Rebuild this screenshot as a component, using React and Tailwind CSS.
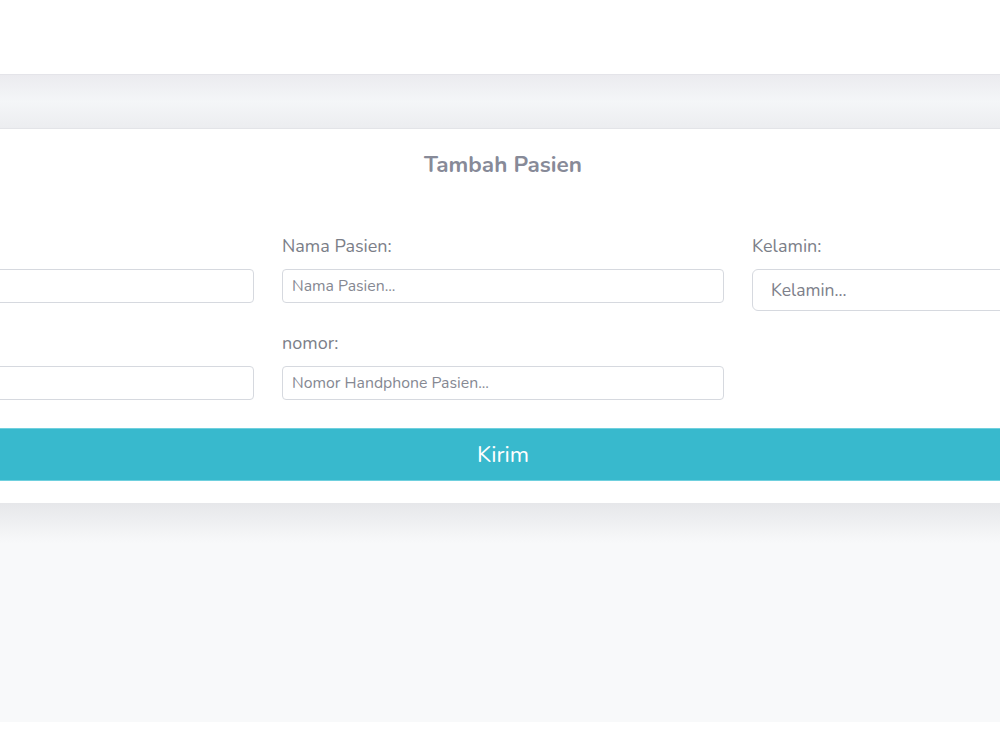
import React from 'react';

const Field = ({ label, placeholder, big }) => (
  <div className="flex flex-col">
    <label className="text-[18px] leading-6 text-[#7b7e88] mb-[11px]">{label || '\u00a0'}</label>
    {big ? (
      <input
        placeholder={placeholder}
        className="h-[42px] w-full rounded-md border border-[#d6d9df] bg-white px-[18px] text-[17.5px] text-[#555] placeholder:text-[#7d808a] outline-none"
      />
    ) : (
      <input
        placeholder={placeholder}
        className="h-[34px] w-full rounded border border-[#d6d9df] bg-white px-[9px] text-[15.8px] text-[#555] placeholder:text-[#858892] outline-none"
      />
    )}
  </div>
);

const App = () => {
  return (
    <div className="min-h-screen w-full overflow-hidden bg-white font-['Nunito','Lato','Noto_Sans',sans-serif]">
      <div className="h-[74px] bg-white" />
      <div className="h-[648px] bg-[#f8f9fa] flex flex-col">
        <div className="h-[55px] border-t border-[#e4e4e9] bg-gradient-to-b from-[#ebebef] via-[#f4f6f8] to-[#ecedf0] border-b border-b-[#e3e4e8]" />
        <section className="bg-white pt-[22px] pb-[22px]">
          <div className="ml-[-188px] w-[1382px] shrink-0">
            <h2 className="text-center text-[22.5px] leading-7 font-bold text-[#878a98]">Tambah Pasien</h2>
            <div className="mt-[55px] grid grid-cols-3 gap-x-[28px] gap-y-[20px]">
              <Field label="" placeholder="" />
              <Field label="Nama Pasien:" placeholder="Nama Pasien..." />
              <Field label="Kelamin:" placeholder="Kelamin..." big />
              <Field label="" placeholder="" />
              <Field label="nomor:" placeholder="Nomor Handphone Pasien..." />
              <div />
            </div>
            <button className="mt-[28px] h-[53px] w-full bg-[#38b9cd] border-y border-[#6fd0de] text-[22.5px] text-white">
              Kirim
            </button>
          </div>
        </section>
        <div className="h-[40px] bg-gradient-to-b from-[#e6e7ea] to-[#f8f9fa]" />
      </div>
    </div>
  );
};

export default App;
